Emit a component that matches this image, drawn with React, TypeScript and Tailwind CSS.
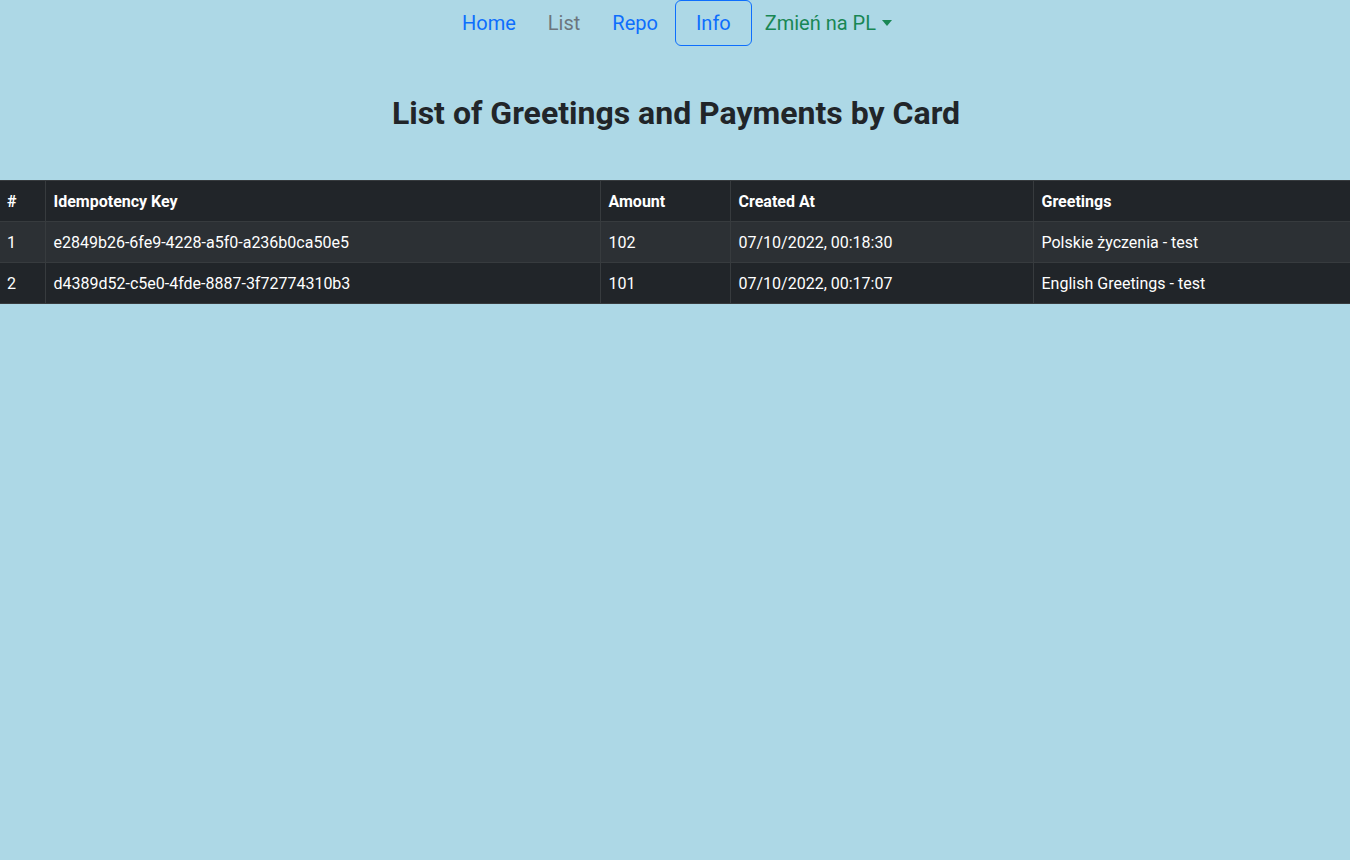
import React from "react";

const rows = [
  { n: "1", key: "e2849b26-6fe9-4228-a5f0-a236b0ca50e5", amount: "102", created: "07/10/2022, 00:18:30", greet: "Polskie życzenia - test" },
  { n: "2", key: "d4389d52-c5e0-4fde-8887-3f72774310b3", amount: "101", created: "07/10/2022, 00:17:07", greet: "English Greetings - test" },
];

export default function App() {
  return (
    <div className="min-h-[860px] w-full bg-[#add8e6] text-[#212529]" style={{ fontFamily: "Roboto, 'Liberation Sans', sans-serif" }}>
      <nav className="flex justify-center items-center h-[46px] pl-[4px] text-[20px] leading-[30px]">
        <a className="px-4 py-2 text-[#0d6efd]">Home</a>
        <a className="px-4 py-2 text-[#6c757d]">List</a>
        <a className="px-4 py-2 text-[#0d6efd]">Repo</a>
        <a className="ml-[1px] px-5 py-[7px] text-[#0d6efd] border border-[#0d6efd] rounded-md">Info</a>
        <a className="pl-[13px] pr-4 py-2 text-[#198754] flex items-center">
          Zmień na PL
          <span className="ml-[6px] w-0 h-0 border-l-[5.5px] border-r-[5.5px] border-t-[6px] border-l-transparent border-r-transparent border-t-[#198754]" />
        </a>
      </nav>
      <h2 className="text-center pl-[2px] text-[32px] leading-[38px] font-bold mt-[48px] mb-[48px]">List of Greetings and Payments by Card</h2>
      <table className="w-full border-collapse text-white text-[16px] leading-[24px]">
        <thead>
          <tr className="bg-[#212529]">
            <th className="w-[45px] text-left font-bold pl-[7px] pr-2 pt-[9px] pb-[7px] border border-[#373b3e] border-l-0">#</th>
            <th className="w-[555px] text-left font-bold px-2 pt-[9px] pb-[7px] border border-[#373b3e]">Idempotency Key</th>
            <th className="w-[130px] text-left font-bold px-2 pt-[9px] pb-[7px] border border-[#373b3e]">Amount</th>
            <th className="w-[303px] text-left font-bold px-2 pt-[9px] pb-[7px] border border-[#373b3e]">Created At</th>
            <th className="text-left font-bold px-2 pt-[9px] pb-[7px] border border-[#373b3e] border-r-0">Greetings</th>
          </tr>
        </thead>
        <tbody>
          {rows.map((r, i) => (
            <tr key={r.n} className={i === 0 ? "bg-[#2c3034]" : "bg-[#212529]"}>
              <td className="pl-[7px] pr-2 pt-[9px] pb-[7px] border border-[#373b3e] border-l-0">{r.n}</td>
              <td className="px-2 pt-[9px] pb-[7px] border border-[#373b3e]">{r.key}</td>
              <td className="px-2 pt-[9px] pb-[7px] border border-[#373b3e]">{r.amount}</td>
              <td className="px-2 pt-[9px] pb-[7px] border border-[#373b3e]">{r.created}</td>
              <td className="px-2 pt-[9px] pb-[7px] border border-[#373b3e] border-r-0">{r.greet}</td>
            </tr>
          ))}
        </tbody>
      </table>
    </div>
  );
}
